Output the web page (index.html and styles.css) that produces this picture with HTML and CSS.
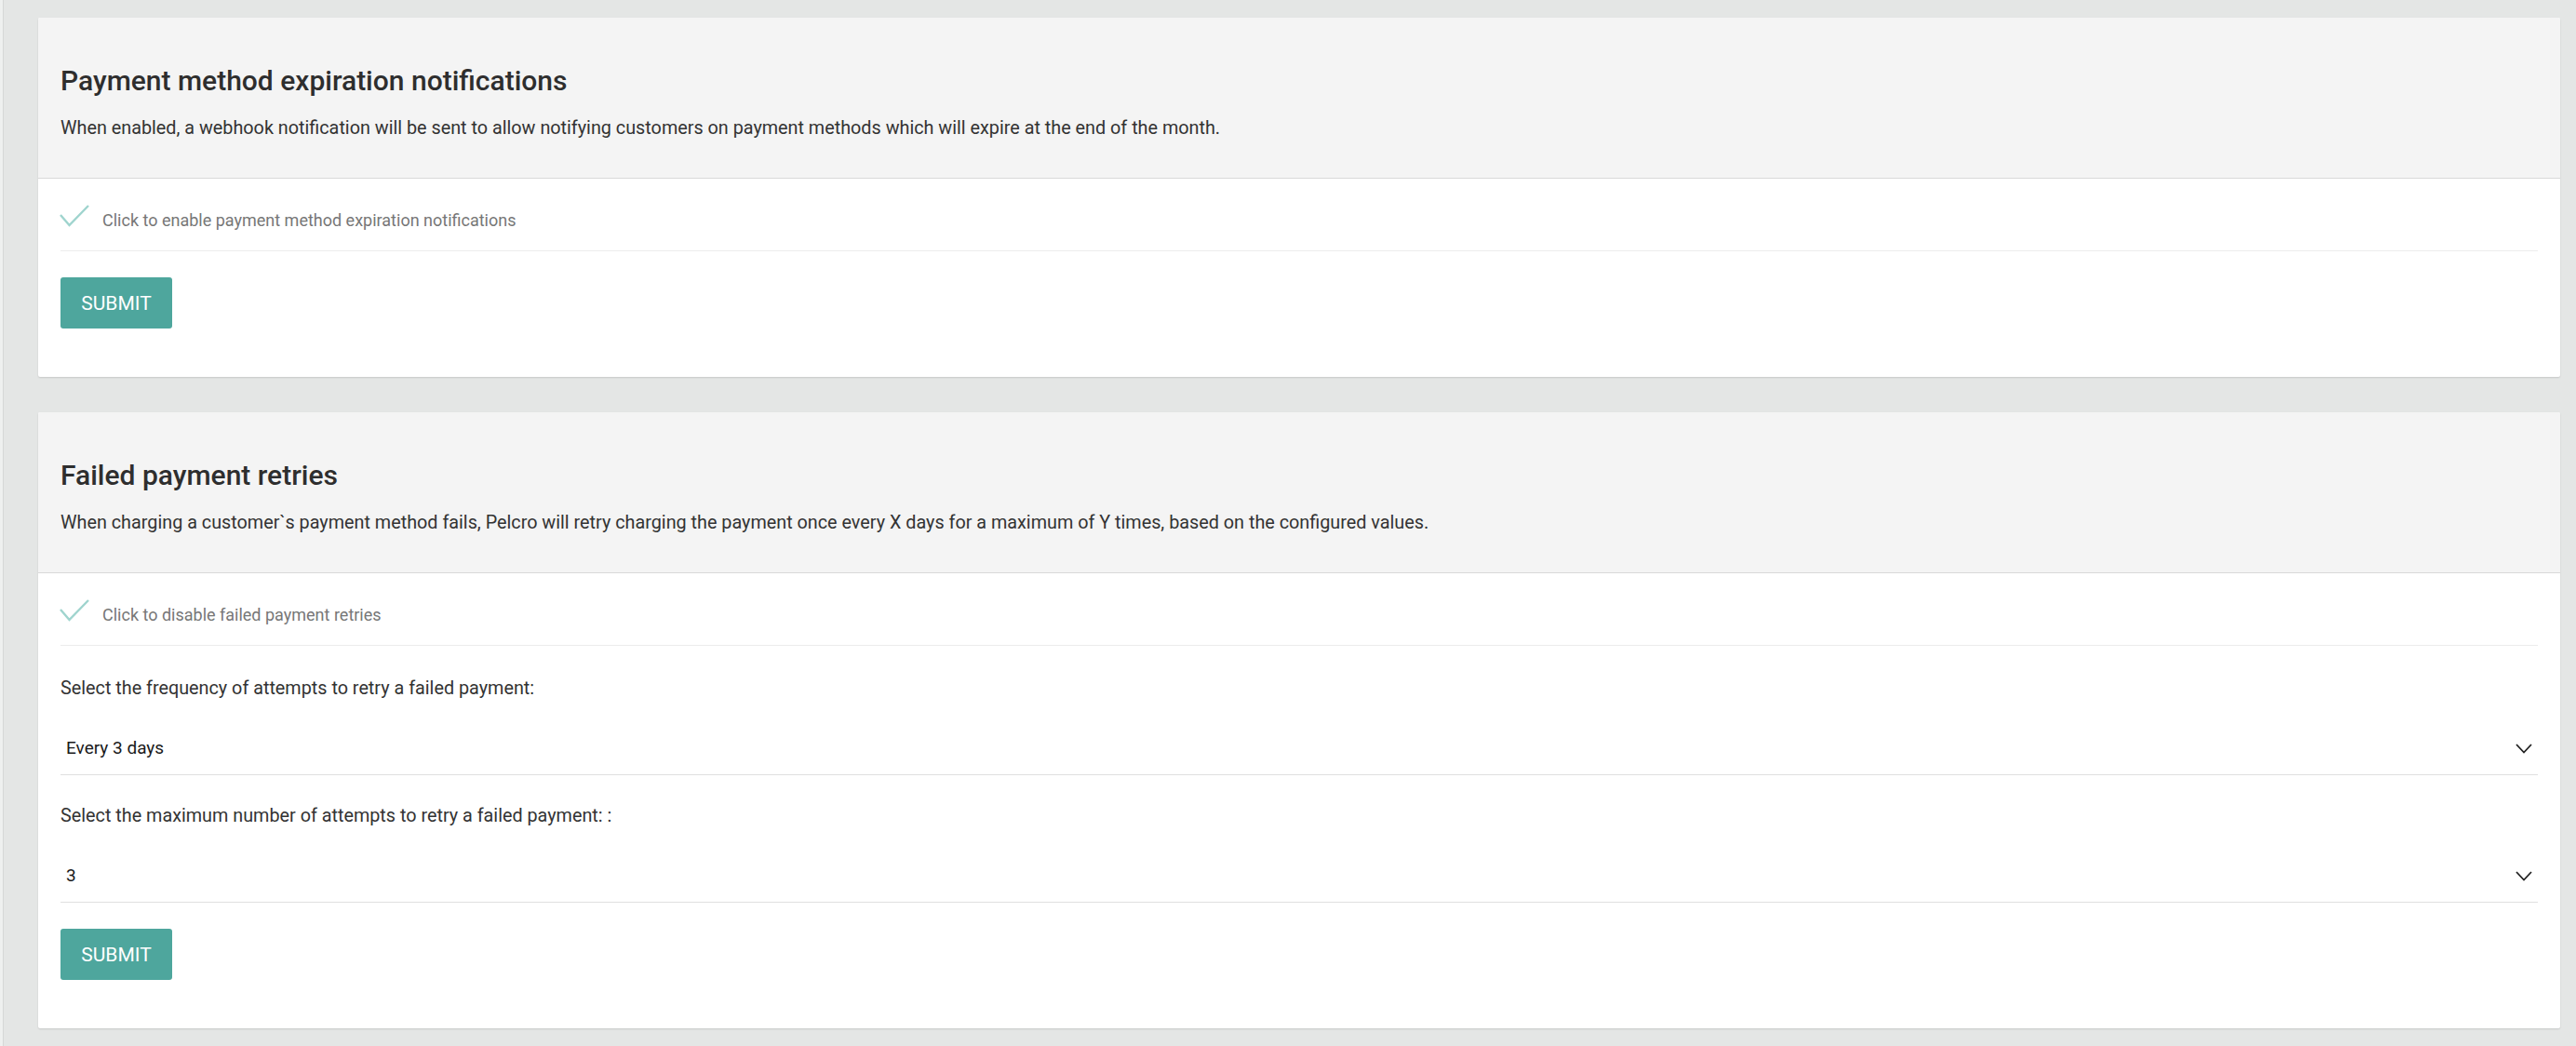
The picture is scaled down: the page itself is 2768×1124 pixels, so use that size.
FILE: index.html
```html
<!DOCTYPE html>
<html lang="en">
<head>
<meta charset="utf-8">
<title>Payment settings</title>
<link rel="stylesheet" href="styles.css">
</head>
<body>
<div class="page">
  <div class="rail"></div>
  <main class="main">
    <section class="card">
      <header class="card-header">
        <h2 class="card-title">Payment method expiration notifications</h2>
        <p class="card-desc">When enabled, a webhook notification will be sent to allow notifying customers on payment methods which will expire at the end of the month.</p>
      </header>
      <div class="card-body">
        <div class="toggle-row">
          <svg class="check" width="32" height="24" viewBox="0 0 32 24"><polyline points="1,11 10.5,22 31,1" fill="none" stroke="#9fd4ce" stroke-width="2.4"/></svg>
          <span class="toggle-label">Click to enable payment method expiration notifications</span>
        </div>
        <button class="btn">SUBMIT</button>
      </div>
    </section>

    <section class="card">
      <header class="card-header">
        <h2 class="card-title">Failed payment retries</h2>
        <p class="card-desc">When charging a customer`s payment method fails, Pelcro will retry charging the payment once every X days for a maximum of Y times, based on the configured values.</p>
      </header>
      <div class="card-body">
        <div class="toggle-row">
          <svg class="check" width="32" height="24" viewBox="0 0 32 24"><polyline points="1,11 10.5,22 31,1" fill="none" stroke="#9fd4ce" stroke-width="2.4"/></svg>
          <span class="toggle-label">Click to disable failed payment retries</span>
        </div>
        <div class="field">
          <div class="field-label">Select the frequency of attempts to retry a failed payment:</div>
          <div class="select">
            <span class="select-value">Every 3 days</span>
            <svg class="chevron" width="18" height="11" viewBox="0 0 18 11"><polyline points="1,1 9,9.5 17,1" fill="none" stroke="#222" stroke-width="1.8"/></svg>
          </div>
        </div>
        <div class="field">
          <div class="field-label">Select the maximum number of attempts to retry a failed payment: :</div>
          <div class="select">
            <span class="select-value">3</span>
            <svg class="chevron" width="18" height="11" viewBox="0 0 18 11"><polyline points="1,1 9,9.5 17,1" fill="none" stroke="#222" stroke-width="1.8"/></svg>
          </div>
        </div>
        <button class="btn">SUBMIT</button>
      </div>
    </section>
  </main>
</div>
</body>
</html>
```

FILE: styles.css
```css
html, body {
  margin: 0;
  padding: 0;
}
body {
  background: #e4e6e5;
  font-family: Roboto, "Liberation Sans", Arial, sans-serif;
  color: #333;
  min-height: 1124px;
}
.page {
  display: flex;
  min-height: 1124px;
}
.rail {
  width: 3px;
  flex: 0 0 3px;
  background: #eef0ef;
  border-right: 1px solid #d6d8d7;
}
.main {
  flex: 1;
  padding: 19px 17px 19px 37px;
  display: flex;
  flex-direction: column;
  gap: 38px;
}
.card {
  background: #fff;
  border-radius: 2px;
  box-shadow: 0 1px 2px rgba(0,0,0,0.13);
}
.card-header {
  background: #f4f4f4;
  border-bottom: 1px solid #d9d9d9;
  padding: 51px 24px 41px;
  border-radius: 2px 2px 0 0;
}
.card-title {
  margin: 0;
  font-size: 30px;
  line-height: 34px;
  font-weight: 500;
  color: #2e2e2e;
}
.card-desc {
  margin: 22px 0 0;
  font-size: 19.8px;
  line-height: 24px;
  color: #333;
}
.card-body {
  padding: 0 24px 52px;
}
.toggle-row {
  display: flex;
  align-items: flex-start;
  gap: 14px;
  padding: 29px 0 21px;
  border-bottom: 1px solid #ececec;
}
.check {
  display: block;
  margin-left: -1px;
  margin-top: -1px;
}
.toggle-label {
  margin-top: 5px;
  font-size: 18px;
  line-height: 22px;
  color: #777;
}
.field-label {
  margin-top: 35px;
  font-size: 19.8px;
  line-height: 22px;
  color: #333;
}
.field + .field .field-label {
  margin-top: 33px;
}
.select {
  margin-top: 25px;
  height: 56px;
  display: flex;
  align-items: center;
  justify-content: space-between;
  padding: 0 6px;
  border-bottom: 1px solid #e0e0e0;
}
.select-value {
  font-size: 19px;
  line-height: 22px;
  color: #1a1a1a;
}
.chevron {
  display: block;
}
.btn {
  display: block;
  margin-top: 28px;
  width: 120px;
  height: 55px;
  border: none;
  border-radius: 3px;
  background: #4ea69d;
  color: #fff;
  font-family: Roboto, "Liberation Sans", Arial, sans-serif;
  font-size: 21px;
  padding: 0;
  cursor: pointer;
}
```
